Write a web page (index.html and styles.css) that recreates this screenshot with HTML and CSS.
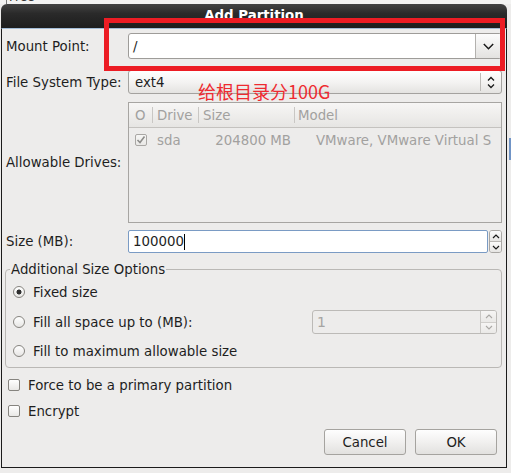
FILE: index.html
```html
<!DOCTYPE html>
<html>
<head>
<meta charset="utf-8">
<link rel="stylesheet" href="styles.css">
</head>
<body>
<div class="topstrip"><div class="free">Free</div></div>
<div class="main">
  <div class="dialog">
    <div class="titlebar">Add Partition</div>
    <div class="dbody">
      <div class="row r1">
        <div class="lbl">Mount Point:</div>
        <div class="combo-entry">
          <div class="ce-text">/</div>
          <div class="ce-btn"><svg width="11" height="7" viewBox="0 0 11 7"><path d="M0.8 1 L5.5 5.7 L10.2 1" fill="none" stroke="#1a1a1a" stroke-width="1.5"/></svg></div>
        </div>
      </div>
      <div class="row r2">
        <div class="lbl">File System Type:</div>
        <div class="combo-btn">
          <span class="cb-text">ext4</span>
          <span class="cb-sep"></span>
          <span class="cb-arrows"><svg width="8" height="13" viewBox="0 0 8 13"><path d="M1 4.5 L4 1.5 L7 4.5 M1 8.5 L4 11.5 L7 8.5" fill="none" stroke="#1a1a1a" stroke-width="1.3"/></svg></span>
        </div>
      </div>
      <div class="row r3">
        <div class="lbl">Allowable Drives:</div>
        <div class="list">
          <div class="lhead">
            <div class="hc c1">O</div>
            <div class="hc c2 sep">Drive</div>
            <div class="hc c3 sep">Size</div>
            <div class="hc c4 sep">Model</div>
          </div>
          <div class="lrow">
            <div class="rc c1"><span class="lcheck"><svg width="10" height="10" viewBox="0 0 10 10"><path d="M1.5 5 L4 7.5 L8.5 1.5" fill="none" stroke="#8e8d8b" stroke-width="1.6"/></svg></span></div>
            <div class="rc c2">sda</div>
            <div class="rc c3 num">204800 MB</div>
            <div class="rc c4 model">VMware, VMware Virtual S</div>
          </div>
        </div>
      </div>
      <div class="row r4">
        <div class="lbl">Size (MB):</div>
        <div class="spin">
          <div class="spin-entry"><span class="caret">100000</span></div>
          <div class="spin-btns">
            <div class="sb"><svg width="8" height="5" viewBox="0 0 8 5"><path d="M1 4 L4 1 L7 4" fill="none" stroke="#1a1a1a" stroke-width="1.2"/></svg></div>
            <div class="sb"><svg width="8" height="5" viewBox="0 0 8 5"><path d="M1 1 L4 4 L7 1" fill="none" stroke="#1a1a1a" stroke-width="1.2"/></svg></div>
          </div>
        </div>
      </div>
      <fieldset class="frame">
        <legend>Additional Size Options</legend>
        <div class="opt o1"><span class="radio on"></span>Fixed size</div>
        <div class="opt o2"><span class="radio"></span>Fill all space up to (MB):
          <div class="dspin">
            <div class="dspin-entry">1</div>
            <div class="dspin-btns">
              <div class="dsb"><svg width="8" height="5" viewBox="0 0 8 5"><path d="M1 4 L4 1 L7 4" fill="none" stroke="#aaa8a5" stroke-width="1.1"/></svg></div>
              <div class="dsb"><svg width="8" height="5" viewBox="0 0 8 5"><path d="M1 1 L4 4 L7 1" fill="none" stroke="#aaa8a5" stroke-width="1.1"/></svg></div>
            </div>
          </div>
        </div>
        <div class="opt o3"><span class="radio"></span>Fill to maximum allowable size</div>
      </fieldset>
      <div class="chk k1"><span class="cbox"></span>Force to be a primary partition</div>
      <div class="chk k2"><span class="cbox"></span>Encrypt</div>
      <div class="buttons">
        <button class="btn">Cancel</button>
        <button class="btn">OK</button>
      </div>
    </div>
  </div>
  <div class="side"><div class="blue"></div></div>
</div>
<div class="annot-box"></div>
<div class="annot-text">给根目录分100G</div>
</body>
</html>
```

FILE: styles.css
```css
html, body {
  margin: 0;
  padding: 0;
}
body {
  width: 511px;
  height: 473px;
  overflow: hidden;
  background: #edeceb;
  font-family: "DejaVu Sans", "Liberation Sans", sans-serif;
  font-size: 13.33px;
  color: #1e1e1e;
  position: relative;
}
.topstrip {
  height: 4px;
  overflow: hidden;
  background: #f3f3f2;
}
.free {
  margin-top: -9px;
  margin-left: 6px;
  padding-left: 2px;
  border-left: 1px solid #7a7a7a;
  line-height: 13px;
  font-size: 12px;
  color: #333;
}
.main {
  display: flex;
}
.dialog {
  margin-left: 1px;
  width: 506px;
  flex: none;
}
.titlebar {
  height: 24px;
  border-radius: 6px 6px 0 0;
  background: linear-gradient(#434343, #2a2a2a 40%, #1d1d1d);
  color: #fff;
  font-weight: bold;
  font-size: 13.33px;
  line-height: 24px;
  text-align: center;
}
.dbody {
  height: 440px;
  box-sizing: border-box;
  border: 1px solid #1b1b1b;
  border-top: 1px solid #a3bcd6;
  padding: 0 4px 0 4px;
}
.row {
  display: flex;
  align-items: center;
}
.lbl {
  width: 122px;
  flex: none;
}
.r1 { margin-top: 4px; height: 26px; }
.r2 { margin-top: 11px; height: 24px; }
.r3 { margin-top: 8px; height: 121px; }
.r4 { margin-top: 7px; height: 23px; }

.combo-entry {
  display: flex;
  width: 374px;
  height: 26px;
  box-sizing: border-box;
  border: 1px solid #9e9c99;
  border-radius: 3px;
  background: #fff;
  overflow: hidden;
}
.ce-text {
  flex: 1;
  padding-left: 4px;
  display: flex;
  align-items: center;
}
.ce-btn {
  width: 26px;
  box-sizing: border-box;
  border-left: 1px solid #b3b1ae;
  background: linear-gradient(#fcfcfc, #e3e2e0);
  display: flex;
  align-items: center;
  justify-content: center;
}

.combo-btn {
  display: flex;
  align-items: center;
  width: 374px;
  height: 24px;
  box-sizing: border-box;
  border: 1px solid #a4a29f;
  border-radius: 3px;
  background: linear-gradient(#ffffff, #f4f3f2 50%, #e4e3e1);
}
.cb-text {
  flex: 1;
  padding-left: 6px;
}
.cb-sep {
  width: 1px;
  height: 18px;
  background: #bdbbb8;
}
.cb-arrows {
  width: 20px;
  display: flex;
  justify-content: center;
  align-items: center;
}

.list {
  width: 375px;
  height: 121px;
  box-sizing: border-box;
  border: 1px solid #a7a5a2;
  background: #edeceb;
  color: #a2a19f;
  overflow: hidden;
}
.lhead {
  display: flex;
  height: 25px;
  box-sizing: border-box;
  border-bottom: 1px solid #c4c2bf;
  background: linear-gradient(#f7f6f5, #e6e5e3);
  align-items: stretch;
}
.hc {
  display: flex;
  align-items: center;
  padding-left: 5px;
  box-sizing: border-box;
}
.sep {
  background: linear-gradient(#c9c7c4, #c9c7c4) no-repeat left center / 1px 16px;
}
.c1 { width: 23px; padding-left: 6px; flex: none; }
.c2 { width: 46px; flex: none; }
.c3 { width: 96px; flex: none; }
.c4 { flex: 1; padding-left: 4px; }
.lrow {
  display: flex;
  height: 24px;
  align-items: center;
}
.rc {
  display: flex;
  align-items: center;
  box-sizing: border-box;
  white-space: nowrap;
  overflow: hidden;
}
.rc.c2 { padding-left: 5px; }
.rc.num { justify-content: flex-end; padding-right: 3px; }
.rc.model { padding-left: 22px; }
.lcheck {
  width: 12px;
  height: 12px;
  box-sizing: border-box;
  border: 1px solid #a9a7a4;
  border-radius: 2px;
  background: linear-gradient(#f6f6f5, #e9e8e6);
  display: flex;
  align-items: center;
  justify-content: center;
}

.spin {
  display: flex;
  height: 23px;
}
.spin-entry {
  width: 360px;
  box-sizing: border-box;
  border: 1px solid #7a9bc4;
  border-radius: 2px;
  background: #fff;
  padding-left: 4px;
  display: flex;
  align-items: center;
}
.caret {
  border-right: 1px solid #000;
  line-height: 16px;
}
.spin-btns {
  margin-left: 1px;
  width: 13px;
  display: flex;
  flex-direction: column;
  border: 1px solid #a9a7a4;
  border-radius: 3px;
  box-sizing: border-box;
  overflow: hidden;
}
.sb {
  flex: 1;
  display: flex;
  align-items: center;
  justify-content: center;
  background: linear-gradient(#fbfbfb, #e6e5e3);
}
.sb + .sb {
  border-top: 1px solid #b9b7b4;
}

.frame {
  margin: 9px 0 0 -1px;
  padding: 3px 4px 4px 0;
  border: 1px solid #bab8b5;
  border-radius: 4px;
  height: 106px;
  box-sizing: border-box;
  min-width: 0;
}
.frame legend {
  padding: 0 1px;
  margin-left: 4px;
  line-height: 15px;
}
.opt {
  display: flex;
  align-items: center;
  height: 24px;
}
.o2 { margin-top: 6px; }
.o3 { margin-top: 5px; }
.radio {
  width: 12px;
  height: 12px;
  box-sizing: border-box;
  border: 1px solid #86847f;
  border-radius: 50%;
  background: linear-gradient(#ffffff, #e7e6e4);
  margin: 0 8px 0 7px;
  flex: none;
}
.radio.on {
  background: radial-gradient(circle, #2f2f2f 0, #2f2f2f 2.2px, transparent 2.8px), linear-gradient(#ffffff, #e7e6e4);
}
.dspin {
  margin-left: auto;
  width: 185px;
  height: 24px;
  display: flex;
  box-sizing: border-box;
  border: 1px solid #bcbab7;
  border-radius: 3px;
  overflow: hidden;
}
.dspin-entry {
  flex: 1;
  padding-left: 4px;
  display: flex;
  align-items: center;
  color: #a5a4a2;
  font-size: 14px;
}
.dspin-btns {
  width: 15px;
  border-left: 1px solid #c9c7c4;
  display: flex;
  flex-direction: column;
}
.dsb {
  flex: 1;
  display: flex;
  align-items: center;
  justify-content: center;
  background: linear-gradient(#f6f5f4, #eae9e7);
}
.dsb + .dsb {
  border-top: 1px solid #d0cecb;
}

.chk {
  display: flex;
  align-items: center;
  height: 20px;
}
.k1 { margin-top: 7px; }
.k2 { margin-top: 6px; }
.cbox {
  width: 12px;
  height: 12px;
  box-sizing: border-box;
  border: 1px solid #86847f;
  border-radius: 2px;
  background: linear-gradient(#ffffff, #e9e8e6);
  margin: 0 8px 0 2px;
  flex: none;
}

.buttons {
  display: flex;
  justify-content: flex-end;
  gap: 9px;
  margin-top: 8px;
  padding-right: 5px;
}
.btn {
  width: 82px;
  height: 26px;
  box-sizing: border-box;
  border: 1px solid #a5a39f;
  border-radius: 3px;
  background: linear-gradient(#fefefe, #f1f0ef 50%, #e2e1df);
  font-family: "DejaVu Sans", "Liberation Sans", sans-serif;
  font-size: 13.33px;
  color: #1e1e1e;
  padding: 0;
}

.side {
  flex: 1;
}
.blue {
  margin-top: 134px;
  height: 22px;
  background: #7094c6;
  margin-left: 2px;
}

.annot-box {
  position: absolute;
  left: 104px;
  top: 18px;
  width: 401px;
  height: 53px;
  box-sizing: border-box;
  border: 5px solid #ec1c24;
}
.annot-text {
  position: absolute;
  left: 198px;
  top: 81px;
  font-family: "Noto Sans CJK SC", sans-serif;
  font-size: 18px;
  line-height: 20px;
  color: #ee2a30;
}
```
